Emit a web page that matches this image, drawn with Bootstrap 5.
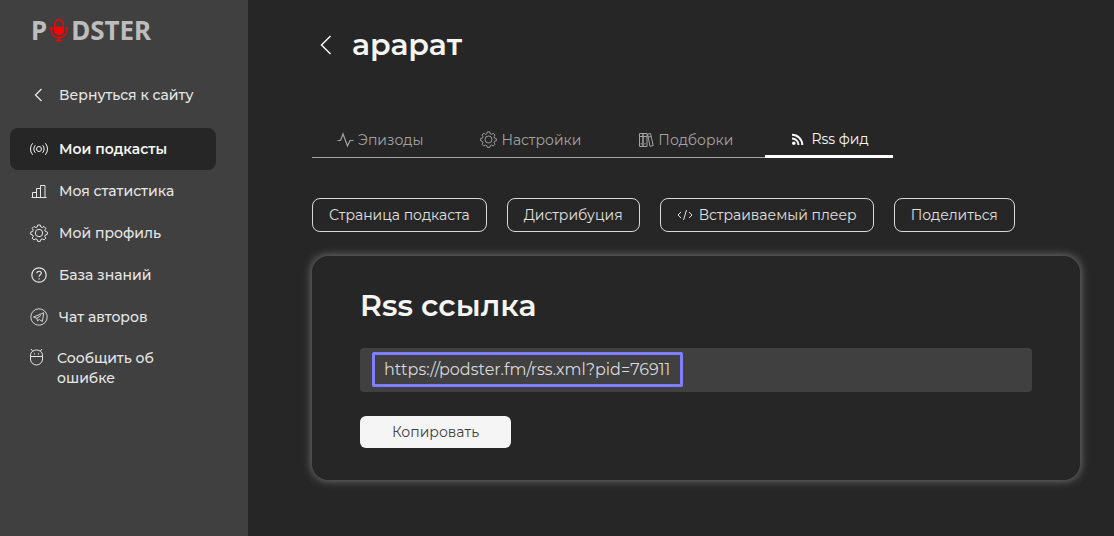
<!DOCTYPE html>
<html lang="ru">
<head>
<meta charset="utf-8">
<meta name="viewport" content="width=device-width, initial-scale=1">
<title>Podster — Rss фид</title>
<link href="https://cdn.jsdelivr.net/npm/bootstrap@5.3.0/dist/css/bootstrap.min.css" rel="stylesheet">
<style>
  body { font-family: Montserrat, Inter, sans-serif; font-size: 14px; line-height: 20px; background: #262626; color: #f5f5f5; }
  svg { fill: none; stroke: currentColor; flex: none; }
  .sidebar { width: 248px; flex: none; background: #404040; padding: 16px 32px 16px 10px; }
  .logo { font: 700 26px/28px "Noto Sans", sans-serif; color: #bdbdbd; margin: 0 0 30px 21px; gap: 2px; }
  .logo:hover { color: #bdbdbd; }
  .logo svg { stroke: #f00; }
  .side-link { display: flex; align-items: center; gap: 11px; min-height: 42px; padding: 0 20px; border-radius: 8px; color: #e6e6e6; font-weight: 500; text-decoration: none; }
  .side-link:hover { color: #fff; }
  .side-link.active { background: #262626; color: #f5f5f5; font-weight: 600; }
  .side-link svg { width: 18px; height: 18px; }
  .back { margin-bottom: 12px; }
  .report { align-items: flex-start; gap: 9px; padding: 10px 20px 0; }
  .content { padding: 25px 34px 40px 64px; min-width: 0; }
  h1, h2 { font-size: 30px; line-height: 40px; font-weight: 600; margin: 0; }
  .title-row { gap: 18px; padding-left: 6px; margin-bottom: 55px; }
  .tabs { width: fit-content; margin-bottom: 40px; }
  .tab { display: flex; align-items: center; gap: 4px; height: 38px; padding: 2px 32px 0 25px; color: #a3a3a3; text-decoration: none; border-bottom: 1px solid #a3a3a3; }
  .tab.active { gap: 7px; padding: 3px 24px 0 26px; color: #f5f5f5; border-bottom: 3px solid #fff; }
  .actions { gap: 20px; margin-bottom: 24px; }
  .btn-line { height: 34px; padding: 0 16px; border: 1px solid #d9d9d9; border-radius: 8px; color: #e0e0e0; font-size: 14px; line-height: 20px; }
  .player { gap: 6px; }
  .panel { border-radius: 16px; padding: 30px 48px 32px; box-shadow: 0 0 8px 1px #707070; background: #262626; }
  .field { background: #404040; border-radius: 4px; padding: 4px 12px; margin: 22px 0 24px; }
  .rss-url { width: 311px; max-width: 100%; height: 35px; margin-bottom: 1px; border: 3px solid #8080ff; border-radius: 2px; background: none; color: #d9d9d9; font-size: 16px; padding: 0 9px; display: block; outline: 0; }
  .btn-copy { width: 151px; height: 32px; padding: 0; background: #f5f5f5; color: #404040; border-radius: 6px; font-size: 14px; line-height: 20px; }
</style>
</head>
<body>
<div class="d-flex min-vh-100">
  <aside class="sidebar">
    <a class="logo d-flex align-items-center text-decoration-none" href="#" aria-label="Podster"><span>P</span>
      <svg width="20" height="24" viewBox="0 0 20 24" stroke-width="1.4"><rect x="5.7" y="1.7" width="8.6" height="14.6" rx="4.3"/><path d="M5.7 9.5h8.6v2.500a4.300 4.300 0 0 1-8.600 0z" fill="#f00"/><path d="M2 10v2c0 4.500 3.500 7.500 8 7.500s8-3 8-7.500v-2M.8 10.200h3M16.200 10.200h3M10 19.500v3M6.500 22.500h7"/></svg>
      <span>DSTER</span></a>
    <nav>
      <a class="side-link back" href="#"><svg viewBox="0 0 18 18" stroke-width="1.3"><path d="M11.500 3 5.500 9l6 6"/></svg>Вернуться к сайту</a>
      <a class="side-link active" href="#"><svg viewBox="0 0 18 18"><circle cx="9" cy="9" r="2.500"/><path d="M5.400 5.200a5.500 5.500 0 0 0 0 7.600M12.600 5.200a5.500 5.500 0 0 1 0 7.600M2.600 3.300a8.800 8.800 0 0 0 0 11.400M15.400 3.300a8.800 8.800 0 0 1 0 11.400"/></svg>Мои подкасты</a>
      <a class="side-link" href="#"><svg viewBox="0 0 18 18"><path d="M1.500 15.500h15M2.500 15.500v-5h4v5M6.500 15.500v-9h4v9M10.500 15.500v-12h4.500v12"/></svg>Моя статистика</a>
      <a class="side-link" href="#"><svg viewBox="0 0 18 18"><use href="#gear"/></svg>Мой профиль</a>
      <a class="side-link" href="#"><svg viewBox="0 0 18 18"><circle cx="9" cy="9" r="7.200" stroke-width="1.200"/><path stroke-width="1.200" d="M6.800 7.200C6.800 4.500 11.300 4.700 11.300 7.100c0 1.700-2.200 1.700-2.200 3.600M9.100 12.200v1.300"/></svg>База знаний</a>
      <a class="side-link" href="#"><svg viewBox="0 0 18 18" stroke-width=".9"><circle cx="9" cy="9" r="8.200"/><path stroke-linejoin="round" d="M3.500 9 13.800 4.800l-1.500 8.700-3-2-1.800 1.400-.7-2.600zM6.800 10.300l4-2.800"/></svg>Чат авторов</a>
      <a class="side-link report" href="#"><svg viewBox="0 0 18 18"><path d="M.5 8.500h12v2.500a6 6 0 0 1-12 0zM.5 8.500V7a6 5 0 0 1 12 0v1.500M2.800 3.300 1 1M10.200 3.300 12 1"/><path d="M4 5.800h1M8 5.800h1" stroke-width="1.300"/></svg><span>Сообщить об ошибке</span></a>
    </nav>
  </aside>
  <main class="content flex-grow-1">
    <div class="title-row d-flex align-items-center">
      <a href="#" class="text-reset d-flex" aria-label="Назад"><svg width="16" height="22" viewBox="0 0 16 22" stroke-width="1.500"><path d="M12.500 2 3.500 11l9 9"/></svg></a>
      <h1>арарат</h1>
    </div>
    <nav class="tabs d-flex">
      <a class="tab" href="#"><svg width="17" height="16" viewBox="0 0 17 16" stroke-width="1.200"><path d="M.5 8.500h3L6 2l4.500 12 2.500-5.500h3.500"/></svg>Эпизоды</a>
      <a class="tab" href="#"><svg width="17" height="17" viewBox="0 0 18 18"><use href="#gear"/></svg>Настройки</a>
      <a class="tab" href="#"><svg width="16" height="16" viewBox="0 0 16 16"><path d="M1.500 1.500h3.500v13H1.500zM5 1.500h4v13H5zM1.500 4.500H9M9.500 2.300l3-.8 2.700 12-3.200.8zM10 5.200l3-.8M3.200 11v1.500M7 11v1.500"/></svg>Подборки</a>
      <a class="tab active" href="#" aria-current="page"><svg width="13" height="13" viewBox="0 0 13 13" stroke-width="2"><circle cx="2.800" cy="10.200" r="1.800" fill="currentColor" stroke="none"/><path d="M1 5.500A6.500 6.500 0 0 1 7.500 12M1 1.700A10.300 10.300 0 0 1 11.300 12"/></svg>Rss фид</a>
    </nav>
    <div class="actions d-flex flex-wrap">
      <button type="button" class="btn btn-line">Страница подкаста</button>
      <button type="button" class="btn btn-line">Дистрибуция</button>
      <button type="button" class="btn btn-line player d-flex align-items-center"><svg width="16" height="12" viewBox="0 0 16 12"><path d="M4 3 1 6l3 3M12 3l3 3-3 3M9.500 1l-3 10"/></svg>Встраиваемый плеер</button>
      <button type="button" class="btn btn-line">Поделиться</button>
    </div>
    <section class="panel">
      <h2><label for="rss">Rss ссылка</label></h2>
      <div class="field"><input class="rss-url" id="rss" type="text" readonly value="https://podster.fm/rss.xml?pid=76911"></div>
      <button type="button" class="btn btn-copy">Копировать</button>
    </section>
  </main>
</div>
<svg width="0" height="0" class="position-absolute" aria-hidden="true"><defs><g id="gear"><circle cx="9" cy="9" r="3.700"/><path stroke-linejoin="round" d="M7.700 1h2.600l.6 2 1.300.5 1.900-1 1.700 1.800-1 1.800.5 1.300 2 .6v2.400l-2 .6-.5 1.300 1 1.800-1.700 1.800-1.900-1-1.300.5-.6 2H7.700l-.6-2-1.300-.5-1.900 1-1.700-1.800 1-1.800-.5-1.300-2-.6V8l2-.6.5-1.300-1-1.800 1.700-1.800 1.900 1L7.100 3z"/></g></defs></svg>
<script src="https://cdn.jsdelivr.net/npm/bootstrap@5.3.0/dist/js/bootstrap.bundle.min.js"></script>
</body>
</html>
